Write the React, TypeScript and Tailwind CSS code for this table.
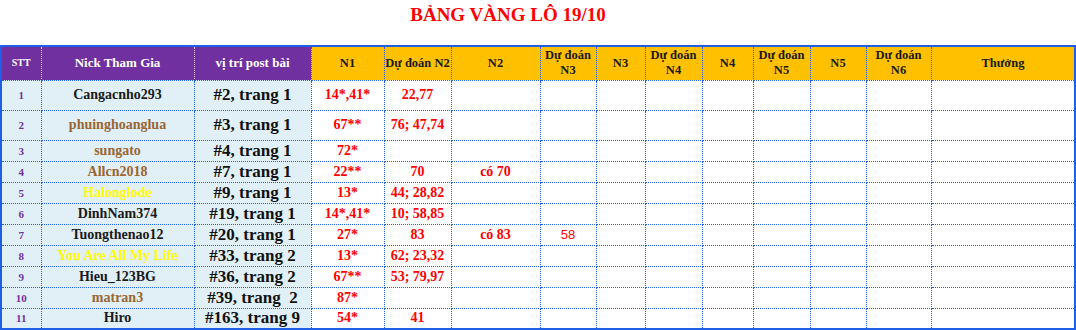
import React from "react";

type Row = {
  stt: number;
  nick: string;
  nickColor: string;
  post: string;
  n1: string;
  dd2: string;
  n2?: string;
  dd3?: string;
  tall?: boolean;
};

const ROWS: Row[] = [
  { stt: 1, nick: "Cangacnho293", nickColor: "text-[#1a1a1a]", post: "#2, trang 1", n1: "14*,41*", dd2: "22,77", tall: true },
  { stt: 2, nick: "phuinghoanglua", nickColor: "text-[#996633]", post: "#3, trang 1", n1: "67**", dd2: "76; 47,74", tall: true },
  { stt: 3, nick: "sungato", nickColor: "text-[#996633]", post: "#4, trang 1", n1: "72*", dd2: "" },
  { stt: 4, nick: "Allcn2018", nickColor: "text-[#996633]", post: "#7, trang 1", n1: "22**", dd2: "70", n2: "có 70" },
  { stt: 5, nick: "Halonglode", nickColor: "text-[#ffff00]", post: "#9, trang 1", n1: "13*", dd2: "44; 28,82" },
  { stt: 6, nick: "DinhNam374", nickColor: "text-[#1a1a1a]", post: "#19, trang 1", n1: "14*,41*", dd2: "10; 58,85" },
  { stt: 7, nick: "Tuongthenao12", nickColor: "text-[#1a1a1a]", post: "#20, trang 1", n1: "27*", dd2: "83", n2: "có 83", dd3: "58" },
  { stt: 8, nick: "You Are All My Life", nickColor: "text-[#ffff00]", post: "#33, trang 2", n1: "13*", dd2: "62; 23,32" },
  { stt: 9, nick: "Hieu_123BG", nickColor: "text-[#1a1a1a]", post: "#36, trang 2", n1: "67**", dd2: "53; 79,97" },
  { stt: 10, nick: "matran3", nickColor: "text-[#996633]", post: "#39, trang  2", n1: "87*", dd2: "" },
  { stt: 11, nick: "Hiro", nickColor: "text-[#1a1a1a]", post: "#163, trang 9", n1: "54*", dd2: "41" },
];

const COLS = [40, 153, 117, 73, 67, 89, 56, 49, 57, 51, 57, 56, 65, 144];

// orange header cells after the purple block
const ORANGE_HEAD = [
  ["N1"],
  ["Dự đoán N2"],
  ["N2"],
  ["Dự đoán", "N3"],
  ["N3"],
  ["Dự đoán", "N4"],
  ["N4"],
  ["Dự đoán", "N5"],
  ["N5"],
  ["Dự đoán", "N6"],
  ["Thưởng"],
];

const cell = "border border-dotted border-[#1f5fe8] text-center align-middle p-0 leading-[16px]";

export default function App() {
  return (
    <div className="w-[1076px] h-[330px] bg-white overflow-hidden font-['Liberation_Serif',serif] font-bold">
      {/* Title */}
      <div className="h-[45px] w-[1016px] pt-[5px] text-center text-[19px] leading-[20px] text-[#ff0000]">
        BẢNG VÀNG LÔ 19/10
      </div>

      <table className="table-fixed border-collapse w-[1074px] border-2 border-solid border-[#1f5fe8]">
        <colgroup>
          {COLS.map((w, i) => (
            <col key={i} style={{ width: w }} />
          ))}
        </colgroup>
        <thead>
          <tr className="h-[34px]">
            <th className={`${cell} bg-[#7030a0] text-white text-[10px] border-x-white/80`}>STT</th>
            <th className={`${cell} bg-[#7030a0] text-white text-[13px] border-x-white/80`}>Nick Tham Gia</th>
            <th className={`${cell} bg-[#7030a0] text-white text-[13px] border-l-white/80`}>vị trí post bài</th>
            {ORANGE_HEAD.map((lines, i) => (
              <th key={i} className={`${cell} bg-[#ffc000] text-[#1a1a1a] text-[12.5px] !leading-[15px]`}>
                {lines.map((l) => (
                  <div key={l} className="whitespace-nowrap">{l}</div>
                ))}
              </th>
            ))}
          </tr>
        </thead>
        <tbody>
          {ROWS.map((r) => (
            <tr key={r.stt} className={r.tall ? "h-[30px]" : "h-[21px]"}>
              <td className={`${cell} bg-[#e1f0f6] text-[#7030a0] text-[11px]`}>{r.stt}</td>
              <td className={`${cell} bg-[#e1f0f6] text-[14px] ${r.nickColor}`}>{r.nick}</td>
              <td className={`${cell} bg-[#e1f0f6] text-[#111] text-[17px] whitespace-pre`}>{r.post}</td>
              <td className={`${cell} text-[#ff0000] text-[14px]`}>{r.n1}</td>
              <td className={`${cell} text-[#ff0000] text-[14px]`}>{r.dd2}</td>
              <td className={`${cell} text-[#ff0000] text-[14px]`}>{r.n2 ?? ""}</td>
              <td className={`${cell} text-[#ff0000] text-[13px] font-normal font-['Liberation_Sans',sans-serif]`}>
                {r.dd3 ?? ""}
              </td>
              {Array.from({ length: 8 }).map((_, i) => (
                <td key={i} className={cell}></td>
              ))}
            </tr>
          ))}
        </tbody>
      </table>
    </div>
  );
}
